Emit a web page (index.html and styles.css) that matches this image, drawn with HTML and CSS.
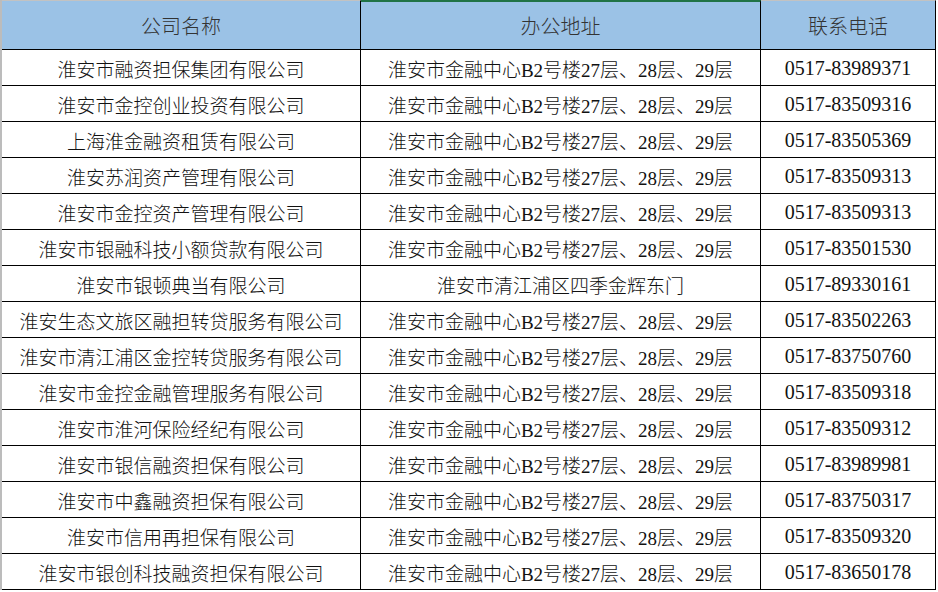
FILE: index.html
```html
<!DOCTYPE html>
<html lang="zh-CN">
<head>
<meta charset="utf-8">
<title>公司列表</title>
<link rel="stylesheet" href="styles.css">
</head>
<body>
<div class="sheet">
  <div class="hd c1">公司名称</div>
  <div class="hd c2 sel">办公地址</div>
  <div class="hd c3">联系电话</div>

  <div class="td c1">淮安市融资担保集团有限公司</div>
  <div class="td c2">淮安市金融中心B2号楼27层、28层、29层</div>
  <div class="td c3 tel">0517-83989371</div>

  <div class="td c1">淮安市金控创业投资有限公司</div>
  <div class="td c2">淮安市金融中心B2号楼27层、28层、29层</div>
  <div class="td c3 tel">0517-83509316</div>

  <div class="td c1">上海淮金融资租赁有限公司</div>
  <div class="td c2">淮安市金融中心B2号楼27层、28层、29层</div>
  <div class="td c3 tel">0517-83505369</div>

  <div class="td c1">淮安苏润资产管理有限公司</div>
  <div class="td c2">淮安市金融中心B2号楼27层、28层、29层</div>
  <div class="td c3 tel">0517-83509313</div>

  <div class="td c1">淮安市金控资产管理有限公司</div>
  <div class="td c2">淮安市金融中心B2号楼27层、28层、29层</div>
  <div class="td c3 tel">0517-83509313</div>

  <div class="td c1">淮安市银融科技小额贷款有限公司</div>
  <div class="td c2">淮安市金融中心B2号楼27层、28层、29层</div>
  <div class="td c3 tel">0517-83501530</div>

  <div class="td c1">淮安市银顿典当有限公司</div>
  <div class="td c2">淮安市清江浦区四季金辉东门</div>
  <div class="td c3 tel">0517-89330161</div>

  <div class="td c1">淮安生态文旅区融担转贷服务有限公司</div>
  <div class="td c2">淮安市金融中心B2号楼27层、28层、29层</div>
  <div class="td c3 tel">0517-83502263</div>

  <div class="td c1">淮安市清江浦区金控转贷服务有限公司</div>
  <div class="td c2">淮安市金融中心B2号楼27层、28层、29层</div>
  <div class="td c3 tel">0517-83750760</div>

  <div class="td c1">淮安市金控金融管理服务有限公司</div>
  <div class="td c2">淮安市金融中心B2号楼27层、28层、29层</div>
  <div class="td c3 tel">0517-83509318</div>

  <div class="td c1">淮安市淮河保险经纪有限公司</div>
  <div class="td c2">淮安市金融中心B2号楼27层、28层、29层</div>
  <div class="td c3 tel">0517-83509312</div>

  <div class="td c1">淮安市银信融资担保有限公司</div>
  <div class="td c2">淮安市金融中心B2号楼27层、28层、29层</div>
  <div class="td c3 tel">0517-83989981</div>

  <div class="td c1">淮安市中鑫融资担保有限公司</div>
  <div class="td c2">淮安市金融中心B2号楼27层、28层、29层</div>
  <div class="td c3 tel">0517-83750317</div>

  <div class="td c1">淮安市信用再担保有限公司</div>
  <div class="td c2">淮安市金融中心B2号楼27层、28层、29层</div>
  <div class="td c3 tel">0517-83509320</div>

  <div class="td c1">淮安市银创科技融资担保有限公司</div>
  <div class="td c2">淮安市金融中心B2号楼27层、28层、29层</div>
  <div class="td c3 tel">0517-83650178</div>
</div>
</body>
</html>
```
FILE: styles.css
```css
html, body {
  margin: 0;
  padding: 0;
  background: #ffffff;
}

.sheet {
  width: 936px;
  box-sizing: border-box;
  border-left: 2px solid #bcbcbc;
  display: grid;
  grid-template-columns: 359px 400px 175px;
  grid-template-rows: 50px repeat(15, 36px);
}

.hd, .td {
  box-sizing: border-box;
  display: flex;
  align-items: center;
  justify-content: center;
  white-space: nowrap;
  border-right: 1px solid #000;
  border-bottom: 1px solid #000;
}

.hd {
  background: #9bc2e6;
  border-top: 1px solid #c2c2c2;
  font-family: "Noto Sans CJK SC", sans-serif;
  font-weight: 300;
  font-size: 20px;
  color: #333333;
  padding-top: 1px;
}

.hd.sel {
  border-top: 2px solid #217346;
  padding-top: 0;
}

.td {
  font-family: "Liberation Serif", "Noto Sans CJK SC", serif;
  font-weight: 300;
  font-size: 19px;
  color: #111111;
  padding-top: 1px;
}

.td.tel {
  font-size: 20px;
}
```
